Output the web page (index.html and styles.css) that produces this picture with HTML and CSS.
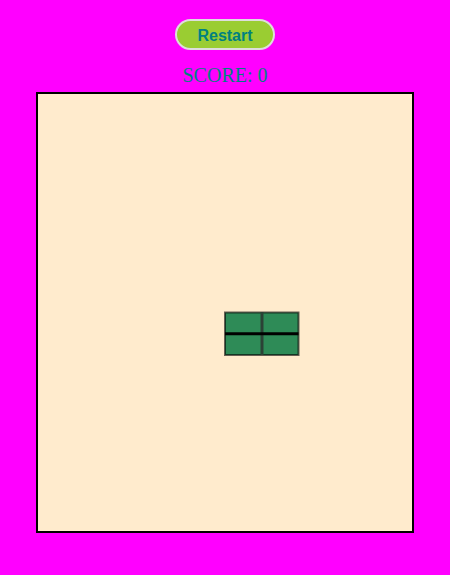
FILE: index.html
```html
<!DOCTYPE html>
<html lang="en">
<head>
    <meta charset="UTF-8">
    <meta name="viewport" content="width=device-width, initial-scale=1.0">
    <title>Tetris</title>
    <link rel="stylesheet" href="styles.css">
</head>
<body>
    <div class="game">
        <button class="restart" type="button">Restart</button>
        <p class="score">SCORE: <span id="score">0</span></p>
        <svg class="board" viewBox="0 0 374 437" preserveAspectRatio="none" role="img" aria-label="Game board">
            <!-- square piece, two blocks per row -->
            <rect class="block" x="187" y="218.5" width="73.5" height="42.5"/>
            <path class="edge" d="M224 218V261"/>
            <path class="seam" d="M187 239.8H260.5"/>
        </svg>
    </div>
</body>
</html>
```

FILE: styles.css
```css
*{
    margin: 0;
    padding: 0;
    box-sizing: border-box;
}
body{
    background: magenta;
    color: teal;
}
.game{
    display: flex;
    flex-direction: column;
    align-items: center;
    padding: 19px 0 42px;
}
.restart{
    padding: 6px 20px 4px;
    border: 2px solid #ddd;
    border-radius: 16px;
    background: yellowgreen;
    color: teal;
    font: bold 16px/17px "Liberation Sans", Arial, sans-serif;
    cursor: pointer;
}
.score{
    margin: 13px 0 5px;
    font: 20px/24px "Liberation Serif", "Times New Roman", serif;
}
.board{
    width: 84%;
    aspect-ratio: 6 / 7;
    border: 2px solid black;
    background: blanchedalmond;
}
.block{
    fill: seagreen;
    stroke: rgba(0, 0, 0, 0.6);
    stroke-width: 2;
}
.edge{
    fill: none;
    stroke: #2b4236;
    stroke-width: 3;
}
.seam{
    fill: none;
    stroke: black;
    stroke-width: 3;
}
```
